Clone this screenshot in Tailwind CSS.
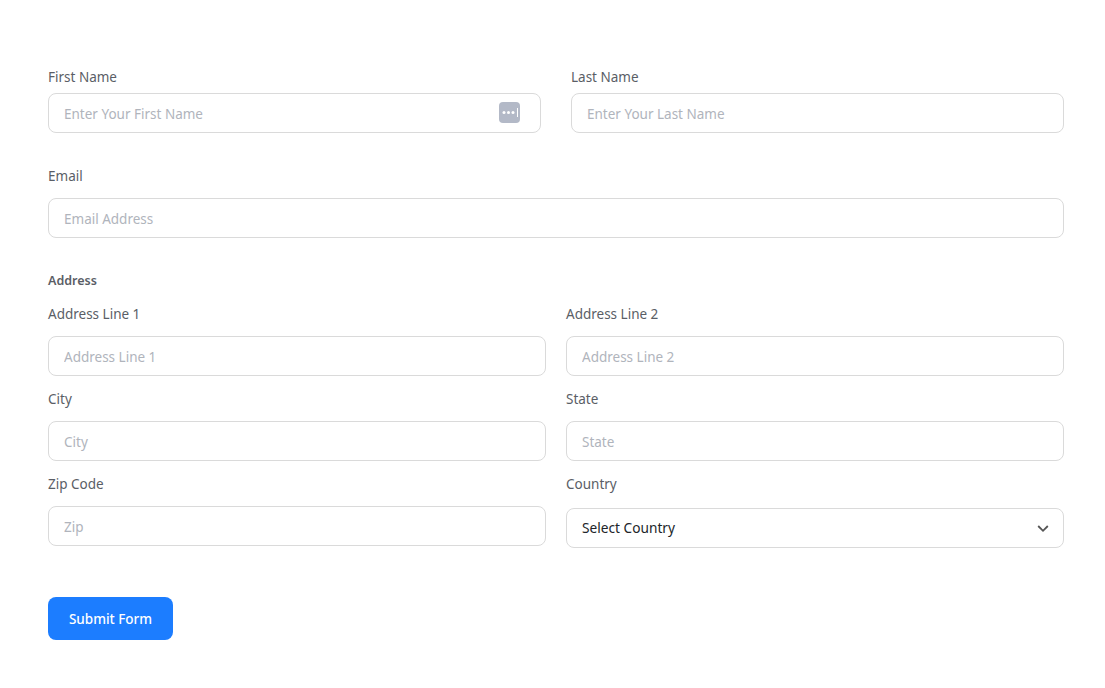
<!DOCTYPE html>
<html lang="en">
<head>
<meta charset="utf-8">
<title>Form</title>
<script src="https://cdn.jsdelivr.net/npm/@tailwindcss/browser@4"></script>
</head>
<body class="bg-white font-['Noto_Sans',sans-serif] text-[13.5px] text-[#4b5563]">
<form class="pt-[67px] pl-[48px] pr-[41px]">
  <div class="grid grid-cols-2 gap-[30px]">
    <div>
      <label class="block h-[20px] leading-[20px] mb-[6px] text-[#5a5e66]">First Name</label>
      <div class="relative">
        <input class="block w-full h-[40px] px-[15px] pt-[2px] rounded-[8px] border border-[#dadada] bg-white outline-none placeholder:text-[#b0b4bc]" placeholder="Enter Your First Name">
        <svg class="absolute right-[21px] top-[9px]" width="21" height="21" viewBox="0 0 21 21"><rect width="21" height="21" rx="4" fill="#b3b9c7"/><circle cx="5" cy="10.500" r="1.500" fill="#fff"/><circle cx="9.500" cy="10.500" r="1.500" fill="#fff"/><circle cx="14" cy="10.500" r="1.500" fill="#fff"/><rect x="18" y="6" width="1" height="9" fill="#fff"/></svg>
      </div>
    </div>
    <div>
      <label class="block h-[20px] leading-[20px] mb-[6px] text-[#5a5e66]">Last Name</label>
      <input class="block w-full h-[40px] px-[15px] pt-[2px] rounded-[8px] border border-[#dadada] bg-white outline-none placeholder:text-[#b0b4bc]" placeholder="Enter Your Last Name">
    </div>
  </div>

  <div class="mt-[33px]">
    <label class="block h-[20px] leading-[20px] mb-[12px] text-[#5a5e66]">Email</label>
    <input class="block w-full h-[40px] px-[15px] pt-[2px] rounded-[8px] border border-[#dadada] bg-white outline-none placeholder:text-[#b0b4bc]" placeholder="Email Address">
  </div>

  <div class="mt-[33px] h-[20px] leading-[20px] text-[12.500px] font-semibold text-[#5a5e66]">Address</div>

  <div class="mt-[13px] grid grid-cols-2 gap-x-[20px] gap-y-[13px]">
    <div>
      <label class="block h-[20px] leading-[20px] mb-[12px] text-[#5a5e66]">Address Line 1</label>
      <input class="block w-full h-[40px] px-[15px] pt-[2px] rounded-[8px] border border-[#dadada] bg-white outline-none placeholder:text-[#b0b4bc]" placeholder="Address Line 1">
    </div>
    <div>
      <label class="block h-[20px] leading-[20px] mb-[12px] text-[#5a5e66]">Address Line 2</label>
      <input class="block w-full h-[40px] px-[15px] pt-[2px] rounded-[8px] border border-[#dadada] bg-white outline-none placeholder:text-[#b0b4bc]" placeholder="Address Line 2">
    </div>
    <div>
      <label class="block h-[20px] leading-[20px] mb-[12px] text-[#5a5e66]">City</label>
      <input class="block w-full h-[40px] px-[15px] pt-[2px] rounded-[8px] border border-[#dadada] bg-white outline-none placeholder:text-[#b0b4bc]" placeholder="City">
    </div>
    <div>
      <label class="block h-[20px] leading-[20px] mb-[12px] text-[#5a5e66]">State</label>
      <input class="block w-full h-[40px] px-[15px] pt-[2px] rounded-[8px] border border-[#dadada] bg-white outline-none placeholder:text-[#b0b4bc]" placeholder="State">
    </div>
    <div>
      <label class="block h-[20px] leading-[20px] mb-[12px] text-[#5a5e66]">Zip Code</label>
      <input class="block w-full h-[40px] px-[15px] pt-[2px] rounded-[8px] border border-[#dadada] bg-white outline-none placeholder:text-[#b0b4bc]" placeholder="Zip">
    </div>
    <div>
      <label class="block h-[20px] leading-[20px] mb-[14px] text-[#5a5e66]">Country</label>
      <div class="relative">
        <select class="block w-full h-[40px] px-[15px] rounded-[8px] border border-[#dadada] bg-white outline-none appearance-none text-[13.7px] text-[#212529]"><option>Select Country</option></select>
        <svg class="absolute right-[14px] top-[14px] pointer-events-none" width="14" height="12" viewBox="0 0 14 12" fill="none"><path d="M2.200 4 7 8.800 11.800 4" stroke="#555" stroke-width="1.800"/></svg>
      </div>
    </div>
  </div>

  <button type="button" class="block mt-[49px] w-[125px] h-[43px] pt-[2px] rounded-[8px] bg-[#1c7dff] text-white font-medium text-[13.500px]">Submit Form</button>
</form>
</body>
</html>
